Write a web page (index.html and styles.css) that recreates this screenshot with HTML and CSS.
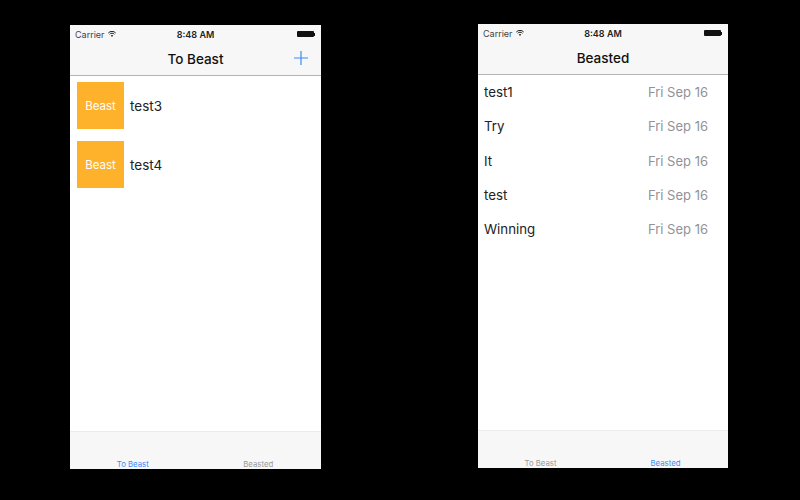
FILE: index.html
```html
<!DOCTYPE html>
<html lang="en">
<head>
    <meta charset="UTF-8">
    <meta name="viewport" content="width=device-width, initial-scale=1.0">
    <title>Beast</title>
    <link rel="stylesheet" href="styles.css">
</head>
<body>
    <div class="stage">
        <!-- Tela: To Beast -->
        <div class="phone">
            <div class="status">
                <span class="carrier">Carrier
                    <svg class="wifi" width="8" height="6" viewBox="0 0 8 6">
                        <path d="M0.3 2 A5 5 0 0 1 7.7 2" stroke="#222" stroke-width="1" fill="none"/>
                        <path d="M1.6 3.3 A3.2 3.2 0 0 1 6.4 3.3" stroke="#222" stroke-width="1" fill="none"/>
                        <path d="M4 6 L2.8 4.6 A1.6 1.6 0 0 1 5.2 4.6 Z" fill="#222"/>
                    </svg>
                </span>
                <span class="time">8:48 AM</span>
                <span class="battery"><span class="battery-body"></span><span class="battery-nub"></span></span>
            </div>
            <div class="navbar">
                <span class="nav-title">To Beast</span>
                <svg class="nav-add" width="14" height="14" viewBox="0 0 14 14">
                    <path d="M7 0 V14 M0 7 H14" stroke="#3d8bf7" stroke-width="1.2"/>
                </svg>
            </div>
            <div class="content">
                <div class="task">
                    <div class="beast-btn">Beast</div>
                    <span class="task-name">test3</span>
                </div>
                <div class="task">
                    <div class="beast-btn">Beast</div>
                    <span class="task-name">test4</span>
                </div>
            </div>
            <div class="tabbar">
                <span class="tab active">To Beast</span>
                <span class="tab">Beasted</span>
            </div>
        </div>

        <!-- Tela: Beasted -->
        <div class="phone phone-right">
            <div class="status">
                <span class="carrier">Carrier
                    <svg class="wifi" width="8" height="6" viewBox="0 0 8 6">
                        <path d="M0.3 2 A5 5 0 0 1 7.7 2" stroke="#222" stroke-width="1" fill="none"/>
                        <path d="M1.6 3.3 A3.2 3.2 0 0 1 6.4 3.3" stroke="#222" stroke-width="1" fill="none"/>
                        <path d="M4 6 L2.8 4.6 A1.6 1.6 0 0 1 5.2 4.6 Z" fill="#222"/>
                    </svg>
                </span>
                <span class="time">8:48 AM</span>
                <span class="battery"><span class="battery-body"></span><span class="battery-nub"></span></span>
            </div>
            <div class="navbar">
                <span class="nav-title">Beasted</span>
            </div>
            <div class="content">
                <div class="done"><span>test1</span><span class="date">Fri Sep 16</span></div>
                <div class="done"><span>Try</span><span class="date">Fri Sep 16</span></div>
                <div class="done"><span>It</span><span class="date">Fri Sep 16</span></div>
                <div class="done"><span>test</span><span class="date">Fri Sep 16</span></div>
                <div class="done"><span>Winning</span><span class="date">Fri Sep 16</span></div>
            </div>
            <div class="tabbar">
                <span class="tab">To Beast</span>
                <span class="tab active">Beasted</span>
            </div>
        </div>
    </div>
</body>
</html>
```

FILE: styles.css
```css
* {
    margin: 0;
    padding: 0;
    box-sizing: border-box;
}

body {
    font-family: 'Inter', 'Roboto', sans-serif;
    background: #000;
    width: 800px;
    height: 500px;
    overflow: hidden;
}

.stage {
    display: flex;
    gap: 157px;
    padding: 25px 0 0 70px;
}

.phone {
    width: 251px;
    height: 444px;
    background: #fff;
    display: flex;
    flex-direction: column;
}

.phone-right {
    width: 250px;
    margin-top: -1px;
}

.status {
    height: 17px;
    background: #f7f7f7;
    display: flex;
    align-items: center;
    justify-content: space-between;
    padding: 1px 5px 0;
    font-size: 9px;
    color: #222;
    position: relative;
}

.carrier {
    display: flex;
    align-items: center;
    gap: 3px;
    color: #444;
}

.time {
    position: absolute;
    left: 0;
    right: 0;
    text-align: center;
    font-weight: 600;
}

.battery {
    display: flex;
    align-items: center;
    margin-right: 1px;
}

.battery-body {
    width: 17px;
    height: 6px;
    background: #111;
    border-radius: 1px;
}

.battery-nub {
    width: 1px;
    height: 3px;
    background: #111;
}

.navbar {
    height: 34px;
    background: #f7f7f7;
    border-bottom: 1px solid #b4b4b4;
    display: flex;
    align-items: center;
    justify-content: center;
    position: relative;
}

.nav-title {
    font-size: 13.5px;
    font-weight: 500;
    color: #111;
}

.nav-add {
    position: absolute;
    right: 13px;
    top: 9px;
}

.content {
    flex: 1;
    background: #fff;
}

.task {
    height: 59px;
    display: flex;
    align-items: center;
    gap: 6px;
    padding-left: 7px;
}

.beast-btn {
    width: 47px;
    height: 47px;
    background: #feb12b;
    color: #fff;
    font-size: 11.5px;
    display: flex;
    align-items: center;
    justify-content: center;
}

.task-name {
    font-size: 13.5px;
    color: #222;
}

.done {
    height: 34.3px;
    display: flex;
    align-items: center;
    justify-content: space-between;
    padding: 0 20px 0 6px;
    font-size: 13.3px;
    color: #222;
}

.date {
    font-size: 13px;
    color: #929297;
}

.tabbar {
    height: 38px;
    background: #f7f7f7;
    border-top: 1px solid #ececec;
    display: flex;
    align-items: flex-end;
}

.tab {
    flex: 1;
    text-align: center;
    font-size: 7.8px;
    color: #999;
}

.tab.active {
    color: #3d8bf7;
}
```
